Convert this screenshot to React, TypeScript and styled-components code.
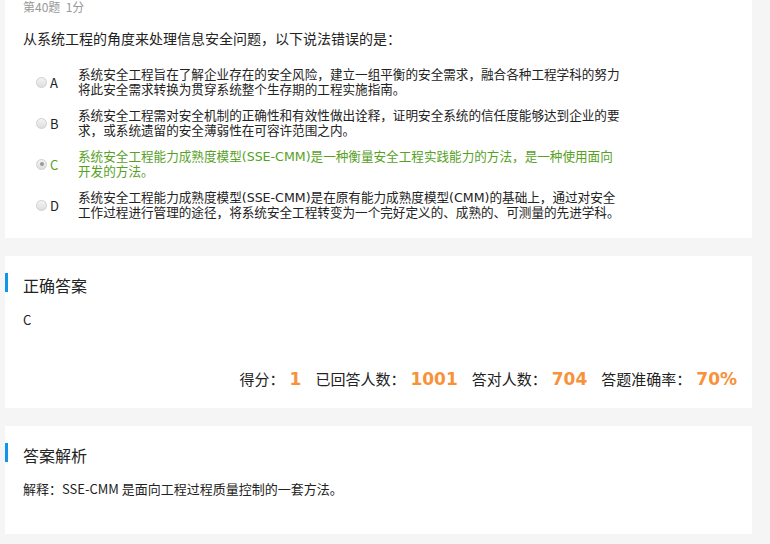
import React from 'react';
import styled, { createGlobalStyle } from 'styled-components';

const GlobalStyle = createGlobalStyle`
  html, body {
    margin: 0;
    padding: 0;
    background: #f5f5f5;
    font-family: "Noto Sans CJK SC", "Noto Sans", sans-serif;
    color: #333;
  }
`;

const Page = styled.div`
  display: flex;
  flex-direction: column;
  gap: 18px;
  width: 747px;
  padding-left: 5px;
  overflow: hidden;
`;

const Card = styled.div<{ top?: number; bottom?: number }>`
  background: #fff;
  padding: ${p => p.top ?? 17}px 15px ${p => p.bottom ?? 17}px 0;
`;

const Body = styled.div`
  padding-left: 18px;
`;

const Meta = styled.div`
  font-size: 12px;
  line-height: 13px;
  color: #999;
`;

const Question = styled.div`
  font-size: 14px;
  line-height: 20px;
  color: #222;
  margin-top: 15px;
`;

const Options = styled.div`
  display: flex;
  flex-direction: column;
  gap: 11px;
  margin-top: 19px;
`;

const Option = styled.div<{ correct?: boolean }>`
  display: flex;
  align-items: center;
  padding-left: 13px;
  color: ${p => (p.correct ? '#57a11f' : '#222')};
`;

const Radio = styled.span<{ checked?: boolean }>`
  width: 11px;
  height: 11px;
  box-sizing: border-box;
  border-radius: 50%;
  border: 1px solid #cfcfcf;
  background: linear-gradient(#f4f4f4, #dedede);
  display: flex;
  align-items: center;
  justify-content: center;
  flex-shrink: 0;
  &::after {
    content: '';
    display: ${p => (p.checked ? 'block' : 'none')};
    width: 4px;
    height: 4px;
    border-radius: 50%;
    background: #9a9a9a;
  }
`;

const Letter = styled.span`
  width: 31px;
  padding-left: 3px;
  box-sizing: border-box;
  font-size: 13px;
  flex-shrink: 0;
`;

const OptionText = styled.div`
  font-family: "DejaVu Sans", "Noto Sans CJK SC", sans-serif;
  font-size: 12.6px;
  line-height: 15px;
`;

const Line = styled.div`
  white-space: nowrap;
`;

const Header = styled.div`
  display: flex;
  align-items: flex-start;
`;

const Bar = styled.span`
  width: 3px;
  height: 19px;
  background: #1094ee;
  flex-shrink: 0;
`;

const Title = styled.h3`
  margin: 0 0 0 15px;
  padding-top: 3px;
  font-size: 16px;
  line-height: 19px;
  font-weight: normal;
  color: #222;
`;

const Answer = styled.div<{ gap: number }>`
  font-size: 13px;
  line-height: 18px;
  color: #222;
  margin-top: ${p => p.gap}px;
`;

const Stats = styled.div`
  display: flex;
  justify-content: flex-end;
  align-items: baseline;
  margin-top: 38px;
  font-size: 15px;
  line-height: 24px;
  color: #222;
`;

const StatValue = styled.span`
  font-family: "DejaVu Sans", Verdana, sans-serif;
  font-weight: bold;
  font-size: 17px;
  color: #f8923a;
  margin: 0 14px 0 5px;
  &:last-child {
    margin-right: 0;
  }
`;

const options = [
  {
    key: 'A',
    lines: [
      '系统安全工程旨在了解企业存在的安全风险，建立一组平衡的安全需求，融合各种工程学科的努力',
      '将此安全需求转换为贯穿系统整个生存期的工程实施指南。',
    ],
  },
  {
    key: 'B',
    lines: [
      '系统安全工程需对安全机制的正确性和有效性做出诠释，证明安全系统的信任度能够达到企业的要',
      '求，或系统遗留的安全薄弱性在可容许范围之内。',
    ],
  },
  {
    key: 'C',
    lines: [
      '系统安全工程能力成熟度模型(SSE-CMM)是一种衡量安全工程实践能力的方法，是一种使用面向',
      '开发的方法。',
    ],
    correct: true,
  },
  {
    key: 'D',
    lines: [
      '系统安全工程能力成熟度模型(SSE-CMM)是在原有能力成熟度模型(CMM)的基础上，通过对安全',
      '工作过程进行管理的途径，将系统安全工程转变为一个完好定义的、成熟的、可测量的先进学科。',
    ],
  },
];

const stats = [
  { label: '得分：', value: '1' },
  { label: '已回答人数：', value: '1001' },
  { label: '答对人数：', value: '704' },
  { label: '答题准确率：', value: '70%' },
];

const App: React.FC = () => {
  return (
    <>
      <GlobalStyle />
      <Page>
        <Card top={0} bottom={18}>
          <Body>
            <Meta>第40题&nbsp;&nbsp;1分</Meta>
            <Question>从系统工程的角度来处理信息安全问题，以下说法错误的是：</Question>
            <Options>
              {options.map(o => (
                <Option key={o.key} correct={o.correct}>
                  <Radio checked={o.correct} />
                  <Letter>{o.key}</Letter>
                  <OptionText>
                    {o.lines.map(l => (
                      <Line key={l}>{l}</Line>
                    ))}
                  </OptionText>
                </Option>
              ))}
            </Options>
          </Body>
        </Card>

        <Card>
          <Header>
            <Bar />
            <Title>正确答案</Title>
          </Header>
          <Body>
            <Answer gap={16}>C</Answer>
            <Stats>
              {stats.map(s => (
                <React.Fragment key={s.label}>
                  <span>{s.label}</span>
                  <StatValue>{s.value}</StatValue>
                </React.Fragment>
              ))}
            </Stats>
          </Body>
        </Card>

        <Card bottom={36}>
          <Header>
            <Bar />
            <Title>答案解析</Title>
          </Header>
          <Body>
            <Answer gap={15}>解释：SSE-CMM 是面向工程过程质量控制的一套方法。</Answer>
          </Body>
        </Card>
      </Page>
    </>
  );
};

export default App;
